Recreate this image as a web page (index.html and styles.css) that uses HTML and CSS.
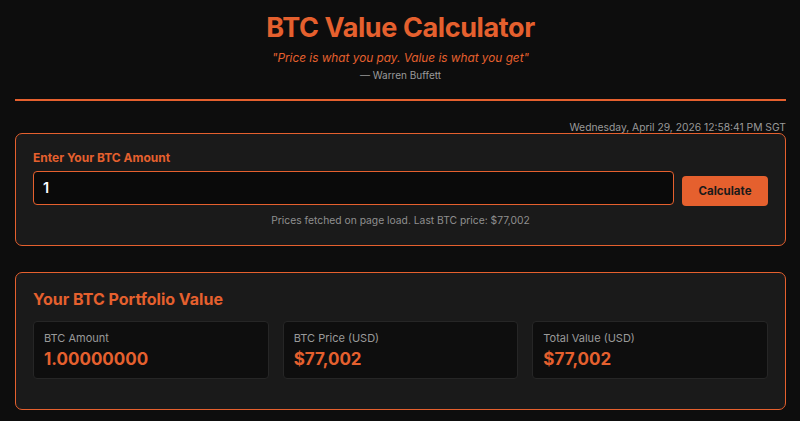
FILE: index.html
```html
<!DOCTYPE html>
<html lang="en">
<head>
<meta charset="utf-8">
<title>BTC Value Calculator</title>
<link rel="stylesheet" href="styles.css">
</head>
<body>
<div class="page">
  <header class="header">
    <h1 class="title">BTC Value Calculator</h1>
    <p class="quote">"Price is what you pay. Value is what you get"</p>
    <p class="author">— Warren Buffett</p>
  </header>
  <div class="datetime">Wednesday, April 29, 2026 12:58:41 PM SGT</div>
  <section class="card input-card">
    <label class="label" for="amt">Enter Your BTC Amount</label>
    <div class="row">
      <div class="input" id="amt">1</div>
      <button class="btn">Calculate</button>
    </div>
    <p class="helper">Prices fetched on page load. Last BTC price: $77,002</p>
  </section>
  <section class="card result-card">
    <h2 class="result-title">Your BTC Portfolio Value</h2>
    <div class="stats">
      <div class="stat">
        <div class="stat-label">BTC Amount</div>
        <div class="stat-value">1.00000000</div>
      </div>
      <div class="stat">
        <div class="stat-label">BTC Price (USD)</div>
        <div class="stat-value">$77,002</div>
      </div>
      <div class="stat">
        <div class="stat-label">Total Value (USD)</div>
        <div class="stat-value">$77,002</div>
      </div>
    </div>
  </section>
</div>
</body>
</html>
```
FILE: styles.css
```css
* { box-sizing: border-box; }
html, body {
  margin: 0;
  padding: 0;
  background: #0d0d0d;
  font-family: Inter, "Liberation Sans", sans-serif;
  color: #e6e6e6;
}
.page {
  padding: 0 14px 0 15px;
}
.header {
  text-align: center;
  padding-top: 11px;
  border-bottom: 2px solid #e5602e;
  height: 101px;
}
.title {
  margin: 0;
  font-size: 27px;
  line-height: 33px;
  font-weight: 700;
  color: #e5602e;
  letter-spacing: -0.4px;
}
.quote {
  margin: 5px 0 0;
  font-size: 11.8px;
  line-height: 18px;
  font-style: italic;
  color: #e5602e;
}
.author {
  margin: 1px 0 0;
  font-size: 10px;
  line-height: 14px;
  color: #9a9a9a;
}
.datetime {
  text-align: right;
  font-size: 10.3px;
  line-height: 14px;
  color: #9a9a9a;
  margin-top: 19px;
  height: 13px;
}
.card {
  background: #1a1a1a;
  border: 1px solid #e5602e;
  border-radius: 7px;
  padding: 16px 17px 18px;
}
.label {
  display: block;
  font-size: 12px;
  line-height: 16px;
  font-weight: 700;
  color: #e5602e;
}
.row {
  display: flex;
  align-items: flex-end;
  gap: 8px;
  margin-top: 5px;
}
.input {
  flex: 1;
  height: 34px;
  background: #0a0a0a;
  border: 1px solid #e5602e;
  border-radius: 4px;
  padding: 0 9px;
  font-size: 14.5px;
  line-height: 32px;
  font-weight: 600;
  color: #ffffff;
}
.btn {
  width: 86px;
  height: 30px;
  margin-bottom: -1px;
  background: #e5602e;
  border: none;
  border-radius: 4px;
  font-family: Inter, "Liberation Sans", sans-serif;
  font-size: 11.5px;
  font-weight: 700;
  color: #1a1a1a;
  padding: 0;
}
.helper {
  margin: 8px 0 0;
  text-align: center;
  font-size: 10.3px;
  line-height: 14px;
  color: #8f8f8f;
}
.result-card {
  margin-top: 26px;
  padding: 16px 17px 30px;
}
.result-title {
  margin: 0;
  font-size: 16px;
  line-height: 20px;
  font-weight: 700;
  color: #e5602e;
}
.stats {
  display: grid;
  grid-template-columns: repeat(3, 1fr);
  gap: 14px;
  margin-top: 12px;
}
.stat {
  background: #0e0e0e;
  border: 1px solid #262626;
  border-radius: 4px;
  padding: 9px 10px 8px;
  height: 58px;
}
.stat-label {
  font-size: 11px;
  line-height: 14px;
  color: #9a9a9a;
}
.stat-value {
  margin-top: 4px;
  font-size: 17px;
  line-height: 21px;
  font-weight: 700;
  color: #e5602e;
}
```
